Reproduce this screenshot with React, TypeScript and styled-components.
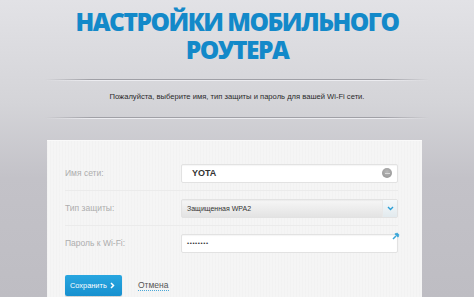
import React from "react";
import styled, { createGlobalStyle } from "styled-components";

const Global = createGlobalStyle`
  html, body { margin: 0; padding: 0; }
  body {
    width: 474px;
    height: 297px;
    overflow: hidden;
    font-family: "Liberation Sans", Arial, sans-serif;
    background: linear-gradient(180deg, #e2e2e6 0%, #d4d4d8 35%, #c3c2c8 60%, #bebdc3 100%);
  }
`;

const Page = styled.div`
  width: 474px;
  height: 297px;
  display: flex;
  flex-direction: column;
  align-items: center;
`;

const Title = styled.h1`
  margin: 8px 0 0;
  font-family: "Open Sans", "DejaVu Sans", sans-serif;
  font-weight: 800;
  font-size: 24.5px;
  line-height: 28px;
  letter-spacing: -1.5px;
  color: #1389c9;
  text-align: center;
  text-transform: uppercase;
`;

const TitleLine = styled.span`
  display: block;
  height: 28px;
`;

const Rule = styled.div<{ $top: number }>`
  margin-top: ${(p) => p.$top}px;
  width: 384px;
  height: 2px;
  background:
    linear-gradient(90deg, rgba(160,160,166,0) 0%, rgba(160,160,166,1) 12%, rgba(160,160,166,1) 88%, rgba(160,160,166,0) 100%) top / 100% 1px no-repeat,
    linear-gradient(90deg, rgba(236,236,240,0) 0%, rgba(236,236,240,1) 12%, rgba(236,236,240,1) 88%, rgba(236,236,240,0) 100%) bottom / 100% 1px no-repeat;
`;

const Subtitle = styled.p`
  margin: 10px 0 0;
  font-size: 7.6px;
  line-height: 11px;
  color: #2a2a2a;
  text-align: center;
`;

const Card = styled.div`
  margin-top: 21px;
  align-self: flex-start;
  margin-left: 47px;
  width: 375px;
  flex: 1;
  box-sizing: border-box;
  padding: 15px 24px 0 18px;
  background-color: #f5f5f5;
  background-image: repeating-linear-gradient(90deg, rgba(0,0,0,0.012) 0 1px, transparent 1px 3px);
  border-top: 1px solid #fafafa;
`;

const Row = styled.div<{ $last?: boolean }>`
  height: 34px;
  display: grid;
  grid-template-columns: 116px 217px;
  align-items: center;
  border-bottom: ${(p) => (p.$last ? "none" : "1px solid #ebebeb")};
`;

const Label = styled.span`
  font-size: 8.5px;
  color: #adadad;
`;

const Field = styled.div<{ $select?: boolean }>`
  position: relative;
  height: 19px;
  box-sizing: border-box;
  border: 1px solid #e2e2e2;
  border-radius: 2px;
  display: flex;
  align-items: center;
  padding-left: 5px;
  background: ${(p) =>
    p.$select ? "linear-gradient(180deg, #f6f6f6 0%, #e3e3e3 100%)" : "#ffffff"};
  box-shadow: inset 0 1px 1px rgba(0,0,0,0.04);
`;

const Value = styled.span<{ $size: number; $bold?: boolean; $indent?: number; $spacing?: number }>`
  font-size: ${(p) => p.$size}px;
  font-weight: ${(p) => (p.$bold ? 700 : 400)};
  padding-left: ${(p) => p.$indent ?? 0}px;
  letter-spacing: ${(p) => p.$spacing ?? 0}px;
  color: #333;
  flex: 1;
`;

const ClearDot = styled.span`
  width: 10px;
  height: 10px;
  border-radius: 50%;
  margin-right: 5px;
  background: radial-gradient(circle at 50% 40%, #b8b8b8, #8e8e8e);
  display: flex;
  align-items: center;
  justify-content: center;
  &::after {
    content: "";
    width: 5px;
    height: 1px;
    background: #d8d8d8;
  }
`;

const Chevron = styled.span`
  width: 14px;
  height: 100%;
  border-left: 1px solid #e8e8e8;
  background: linear-gradient(180deg, #f4f8fa 0%, #e2eaee 100%);
  display: flex;
  align-items: center;
  justify-content: center;
`;

const Pin = styled.span`
  position: absolute;
  right: -3px;
  top: -3px;
  display: flex;
`;

const Actions = styled.div`
  margin-top: 15px;
  display: flex;
  align-items: center;
  gap: 16px;
`;

const SaveButton = styled.button`
  width: 57px;
  height: 21px;
  border: none;
  border-radius: 2px;
  padding: 0 7px 0 5px;
  display: flex;
  align-items: center;
  justify-content: space-between;
  white-space: nowrap;
  background: linear-gradient(180deg, #28a6e0 0%, #1790cf 100%);
  color: #fff;
  font-family: "Liberation Sans", Arial, sans-serif;
  font-size: 7.4px;
  box-shadow: 0 1px 1px rgba(0,0,0,0.15);
`;

const Cancel = styled.a`
  font-size: 8.5px;
  color: #555;
  text-decoration: none;
  border-bottom: 1px dotted #4aa8d8;
  line-height: 9px;
`;

export default function App() {
  return (
    <>
      <Global />
      <Page>
        <Title>
          <TitleLine>Настройки мобильного</TitleLine>
          <TitleLine>роутера</TitleLine>
        </Title>
        <Rule $top={15} />
        <Subtitle>Пожалуйста, выберите имя, тип защиты и пароль для вашей Wi-Fi сети.</Subtitle>
        <Rule $top={15} />
        <Card>
          <Row>
            <Label>Имя сети:</Label>
            <Field>
              <Value $size={9} $bold $indent={5}>
                YOTA
              </Value>
              <ClearDot />
            </Field>
          </Row>
          <Row>
            <Label>Тип защиты:</Label>
            <Field $select>
              <Value $size={7}>Защищенная WPA2</Value>
              <Chevron>
                <svg width="7" height="5" viewBox="0 0 7 5">
                  <path d="M1 1 L3.5 3.5 L6 1" fill="none" stroke="#2a9fd6" strokeWidth="1.4" />
                </svg>
              </Chevron>
            </Field>
          </Row>
          <Row $last>
            <Label>Пароль к Wi-Fi:</Label>
            <Field>
              <Value $size={6} $spacing={0.6}>••••••••</Value>
              <Pin>
                <svg width="8" height="8" viewBox="0 0 8 8">
                  <path d="M1 7 L4 4 M3 1.5 L6.5 5 M4.5 1 L7 3.5" stroke="#3aa6d8" strokeWidth="1.5" fill="none" />
                </svg>
              </Pin>
            </Field>
          </Row>
          <Actions>
            <SaveButton>
              Сохранить
              <svg width="5" height="7" viewBox="0 0 5 7">
                <path d="M1 1 L3.5 3.5 L1 6" fill="none" stroke="#fff" strokeWidth="1.5" />
              </svg>
            </SaveButton>
            <Cancel href="#">Отмена</Cancel>
          </Actions>
        </Card>
      </Page>
    </>
  );
}
